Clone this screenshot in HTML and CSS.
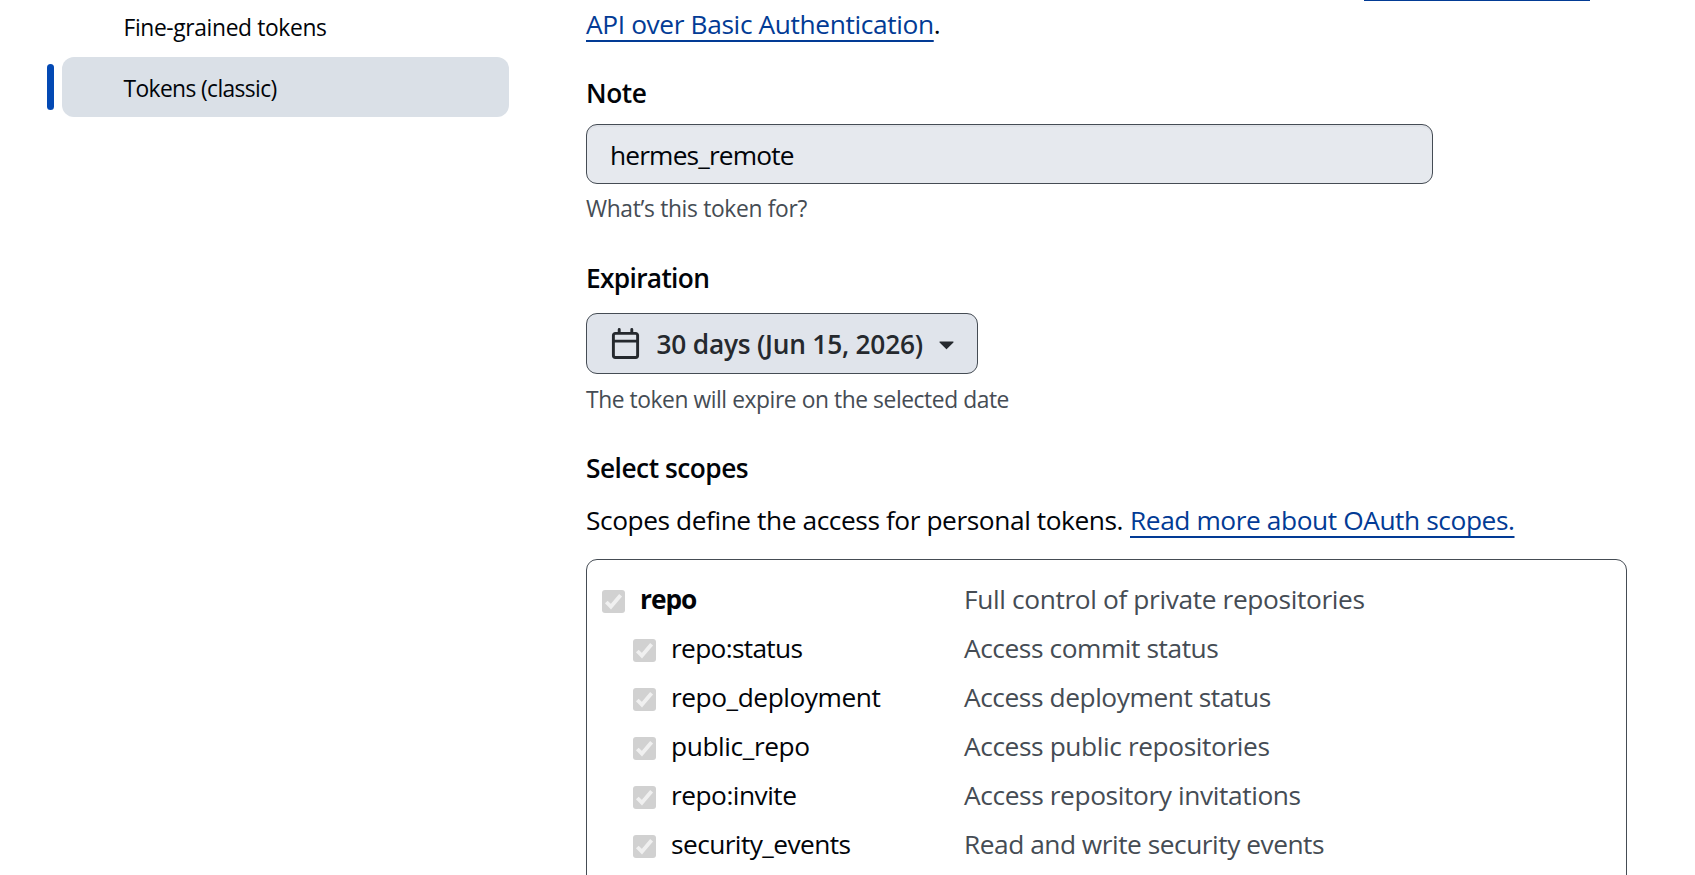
FILE: index.html
```
<!DOCTYPE html>
<html lang="en">
<head>
<meta charset="utf-8">
<title>New personal access token (classic)</title>
<link rel="stylesheet" href="styles.css">
</head>
<body>
<div class="page">
  <nav class="sidebar">
    <a class="nav-item nav-fine">Fine-grained tokens</a>
    <a class="nav-item nav-classic selected">Tokens (classic)</a>
  </nav>
  <main class="content">
    <div class="link-tail"></div>
    <p class="intro"><a class="link api-link">API over Basic Authentication</a>.</p>

    <label class="label note-label">Note</label>
    <div class="input">hermes_remote</div>
    <p class="hint note-hint">What’s this token for?</p>

    <label class="label exp-label">Expiration</label>
    <button class="select" type="button">
      <svg class="icon" viewBox="0 0 16 16"><path d="M4.75 0a.75.75 0 0 1 .75.75V2h5V.75a.75.75 0 0 1 1.5 0V2h1.25c.966 0 1.75.784 1.75 1.75v10.5A1.75 1.75 0 0 1 13.25 16H2.75A1.75 1.75 0 0 1 1 14.25V3.75C1 2.784 1.784 2 2.75 2H4V.75A.75.75 0 0 1 4.75 0ZM2.5 7.5v6.75c0 .138.112.25.25.25h10.5a.25.25 0 0 0 .25-.25V7.5Zm10.75-4H2.75a.25.25 0 0 0-.25.25V6h11V3.75a.25.25 0 0 0-.25-.25Z"/></svg>
      <span class="select-text">30 days (Jun 15, 2026)</span>
      <svg class="icon caret" viewBox="0 0 16 16"><path d="m4.427 7.427 3.396 3.396a.25.25 0 0 0 .354 0l3.396-3.396A.25.25 0 0 0 11.396 7H4.604a.25.25 0 0 0-.177.427Z"/></svg>
    </button>
    <p class="hint exp-hint">The token will expire on the selected date</p>

    <h2 class="label scopes-label">Select scopes</h2>
    <p class="scopes-intro"><span class="scopes-text">Scopes define the access for personal tokens.</span><a class="link oauth-link">Read more about OAuth scopes.</a></p>

    <div class="scopes">
      <div class="row parent"><div class="scope"><svg class="check" viewBox="0 0 23 23"><rect width="23" height="23" rx="3"/><path d="M4.3 12l4.6 4.7L18.6 5.2"/></svg><b class="name n-repo">repo</b></div><span class="desc d-repo">Full control of private repositories</span></div>
      <div class="row"><div class="scope"><svg class="check" viewBox="0 0 23 23"><rect width="23" height="23" rx="3"/><path d="M4.3 12l4.6 4.7L18.6 5.2"/></svg><span class="name n-status">repo:status</span></div><span class="desc d-status">Access commit status</span></div>
      <div class="row"><div class="scope"><svg class="check" viewBox="0 0 23 23"><rect width="23" height="23" rx="3"/><path d="M4.3 12l4.6 4.7L18.6 5.2"/></svg><span class="name n-deploy">repo_deployment</span></div><span class="desc d-deploy">Access deployment status</span></div>
      <div class="row"><div class="scope"><svg class="check" viewBox="0 0 23 23"><rect width="23" height="23" rx="3"/><path d="M4.3 12l4.6 4.7L18.6 5.2"/></svg><span class="name n-public">public_repo</span></div><span class="desc d-public">Access public repositories</span></div>
      <div class="row"><div class="scope"><svg class="check" viewBox="0 0 23 23"><rect width="23" height="23" rx="3"/><path d="M4.3 12l4.6 4.7L18.6 5.2"/></svg><span class="name n-invite">repo:invite</span></div><span class="desc d-invite">Access repository invitations</span></div>
      <div class="row"><div class="scope"><svg class="check" viewBox="0 0 23 23"><rect width="23" height="23" rx="3"/><path d="M4.3 12l4.6 4.7L18.6 5.2"/></svg><span class="name n-security">security_events</span></div><span class="desc d-security">Read and write security events</span></div>
    </div>
  </main>
</div>
</body>
</html>
```
FILE: styles.css
```
* { box-sizing: border-box; }
body {
  margin: 0;
  background: #fff;
  color: #010409;
  font: 26.3px/40px "Open Sans", "Noto Sans", sans-serif;
}
p, h2 { margin: 0; }
.page { display: flex; height: 875px; overflow: hidden; }

.sidebar { width: 586px; flex: none; padding: 0 77px 0 62px; }
.nav-item {
  display: block;
  position: relative;
  height: 60px;
  padding-left: 61.5px;
  border-radius: 12px;
  font-size: 22.8px;
  line-height: 63px;
  white-space: nowrap;
}
.nav-fine { margin-top: -4px; margin-bottom: 1px; letter-spacing: -.36px; }
.nav-classic { letter-spacing: -.62px; }
.selected { background: #dae0e7; }
.selected::before {
  content: "";
  position: absolute;
  left: -15px;
  top: 7px;
  width: 7px;
  height: 46px;
  border-radius: 4px;
  background: #0349b4;
}

.content { width: 1041px; flex: none; white-space: nowrap; }
.link-tail { width: 226px; height: 1px; margin-left: 778px; background: #023b95; }
.link {
  color: #023b95;
  text-decoration: underline 2px;
  text-underline-offset: 6px;
  text-decoration-skip-ink: none;
}
.intro { margin-top: 3px; }
.api-link { letter-spacing: -.37px; }
.label { display: block; font-size: 26.3px; font-weight: 600; line-height: 40px; }
.note-label { margin-top: 29px; letter-spacing: -.4px; }
.input {
  width: 847px;
  height: 60px;
  margin-top: 11px;
  padding: 1px 23px 0;
  border: 1px solid #454c54;
  border-radius: 11px;
  background: #e6e9ee;
  box-shadow: inset 0 2px 0 #dee1e7;
  line-height: 58px;
  letter-spacing: -.84px;
}
.hint { color: #454c54; font-size: 22.8px; line-height: 34px; }
.note-hint { margin-top: 8px; letter-spacing: -.33px; }
.exp-label { margin-top: 32px; letter-spacing: -.68px; }
.select {
  display: flex;
  align-items: center;
  width: 392px;
  height: 61px;
  margin-top: 15px;
  padding: 0 0 0 23px;
  border: 1px solid #454c54;
  border-radius: 11px;
  background: #e0e4eb;
  color: #25292e;
  font: 600 26.3px/58px "Open Sans", "Noto Sans", sans-serif;
  letter-spacing: -.22px;
  white-space: nowrap;
}
.icon { width: 31px; height: 31px; flex: none; fill: currentColor; }
.select-text { width: 274px; margin-left: 15.5px; text-align: left; }
.exp-hint { margin-top: 9px; letter-spacing: -.43px; }
.scopes-label { margin-top: 31px; letter-spacing: -.5px; }
.scopes-intro { display: flex; margin-top: 12px; }
.scopes-text { width: 544px; letter-spacing: -.43px; }
.oauth-link { letter-spacing: -.42px; }

.scopes {
  height: 400px;
  margin-top: 19px;
  padding: 14px 0 0 15px;
  border: 1px solid #454c54;
  border-radius: 11px;
}
.row { display: flex; height: 49px; line-height: 51px; }
.scope { display: flex; width: 362px; flex: none; padding-left: 31px; }
.parent .scope { padding-left: 0; }
.check { width: 23px; height: 23px; flex: none; margin: 16px 15px 0 0; fill: #d1d1d1; }
.check path { fill: none; stroke: #f0f0f0; stroke-width: 3.8; }
.name { font-weight: 400; }
.n-repo { font-weight: 700; letter-spacing: -1px; }
.n-status { letter-spacing: -.69px; }
.n-deploy { letter-spacing: -.45px; }
.n-public { letter-spacing: -.4px; }
.n-invite { letter-spacing: -.5px; }
.n-security { letter-spacing: -.58px; }
.desc { color: #454c54; }
.d-repo { letter-spacing: -.37px; }
.d-status { letter-spacing: -.43px; }
.d-deploy { letter-spacing: -.43px; }
.d-public { letter-spacing: -.4px; }
.d-invite { letter-spacing: -.39px; }
.d-security { letter-spacing: -.48px; }
```
